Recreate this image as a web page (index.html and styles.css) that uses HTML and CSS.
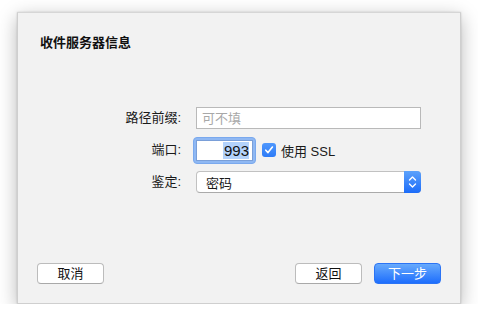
FILE: index.html
```html
<!DOCTYPE html>
<html lang="zh">
<head>
<meta charset="utf-8">
<link rel="stylesheet" href="styles.css">
</head>
<body>
<div class="window">
  <div class="title">收件服务器信息</div>
  <div class="form">
    <label class="label">路径前缀:</label>
    <div class="field"><input class="text-input" type="text" placeholder="可不填"></div>
    <label class="label">端口:</label>
    <div class="field port-row">
      <div class="port-ring"><div class="port-input"><span class="sel">993</span></div></div>
      <span class="checkbox"><svg width="10" height="10" viewBox="0 0 10 10"><path d="M1.8 5.2 L4 7.6 L8.4 2" fill="none" stroke="#fff" stroke-width="1.6" stroke-linecap="round" stroke-linejoin="round"/></svg></span>
      <span class="check-label">使用 SSL</span>
    </div>
    <label class="label">鉴定:</label>
    <div class="field">
      <div class="select"><span class="select-text">密码</span>
        <span class="stepper"><svg width="9" height="14" viewBox="0 0 9 14"><path d="M1.5 5 L4.5 2 L7.5 5 M1.5 9 L4.5 12 L7.5 9" fill="none" stroke="#fff" stroke-width="1.4" stroke-linecap="round" stroke-linejoin="round"/></svg></span>
      </div>
    </div>
  </div>
  <div class="buttons">
    <button class="btn">取消</button>
    <div class="spacer"></div>
    <button class="btn">返回</button>
    <button class="btn primary">下一步</button>
  </div>
</div>
</body>
</html>
```

FILE: styles.css
```css
html, body {
  margin: 0;
  padding: 0;
  background: #ffffff;
}
body {
  font-family: "Liberation Sans", "Noto Sans CJK SC", sans-serif;
  font-size: 13px;
  color: #1a1a1a;
}
.window {
  box-sizing: border-box;
  margin: 12px 0 0 17px;
  width: 444px;
  height: 292px;
  background: #f2f2f2;
  border: 1px solid #cfcfcf;
  border-top-color: #d6d6d6;
  box-shadow: 0 5px 18px rgba(0, 0, 0, 0.28), 0 0 2px rgba(0,0,0,0.15);
  display: flex;
  flex-direction: column;
  padding: 22px 19px 19px 19px;
}
.title {
  font-weight: bold;
  font-size: 13px;
  line-height: 16px;
  padding-left: 3px;
  color: #111;
}
.form {
  margin-top: 56px;
  margin-left: -19px;
  display: grid;
  grid-template-columns: 163px 225px;
  column-gap: 15px;
  row-gap: 10px;
  grid-auto-rows: 22px;
  align-items: center;
}
.label {
  text-align: right;
  line-height: 22px;
  color: #1a1a1a;
}
.field {
  height: 22px;
  display: flex;
  align-items: center;
}
.text-input {
  box-sizing: border-box;
  width: 225px;
  height: 22px;
  border: 1px solid #b9b9b9;
  background: #fff;
  font: inherit;
  padding: 0 5px;
  outline: none;
  margin: 0;
}
.text-input::placeholder {
  color: #a8a8a8;
}
.port-row {
  gap: 0;
}
.port-ring {
  margin-left: -3px;
  padding: 2px;
  border-radius: 4px;
  background: #8fb8f3;
  border: 1px solid #7aa9ee;
}
.port-input {
  box-sizing: border-box;
  width: 57px;
  height: 21px;
  background: #fff;
  border: 1px solid #7a9fd8;
  text-align: right;
  padding: 0 3px;
  line-height: 19px;
  font-size: 15px;
  color: #111;
}
.sel {
  background: #b3d2fb;
  padding: 0 0 0 1px;
}
.checkbox {
  margin-left: 6px;
  width: 14px;
  height: 14px;
  border-radius: 3px;
  background: linear-gradient(#4f98fd, #2d7bf7);
  display: flex;
  align-items: center;
  justify-content: center;
}
.check-label {
  margin-left: 5px;
  font-size: 13px;
}
.select {
  box-sizing: border-box;
  position: relative;
  width: 225px;
  height: 22px;
  background: #fff;
  border: 1px solid #c1c1c1;
  border-bottom-color: #aaaaaa;
  border-radius: 4px;
  display: flex;
  align-items: center;
}
.select-text {
  padding-left: 9px;
  flex: 1;
}
.stepper {
  width: 17px;
  height: 22px;
  margin: -1px -1px -1px 0;
  border-radius: 0 4px 4px 0;
  background: linear-gradient(#5ca2fb, #1c6cf9);
  display: flex;
  align-items: center;
  justify-content: center;
}
.buttons {
  margin-top: auto;
  display: flex;
  align-items: center;
  gap: 12px;
}
.spacer {
  flex: 1;
}
.btn {
  box-sizing: border-box;
  width: 67px;
  height: 21px;
  border: 1px solid #bcbcbc;
  border-bottom-color: #a9a9a9;
  border-radius: 4px;
  background: #fff;
  font: inherit;
  font-size: 13px;
  color: #111;
  padding: 0;
  margin: 0;
  line-height: 19px;
}
.btn.primary {
  border: 1px solid #2b74f5;
  background: linear-gradient(#67aafc, #1e6efd);
  color: #fff;
}
```
